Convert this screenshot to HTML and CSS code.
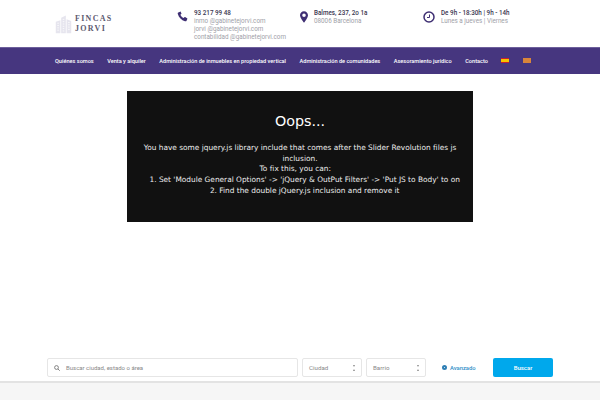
FILE: index.html
```html
<!DOCTYPE html>
<html lang="es">
<head>
    <meta charset="UTF-8">
    <meta name="viewport" content="width=device-width, initial-scale=1.0">
    <title>Fincas Jorvi</title>
    <link rel="stylesheet" href="styles.css">
</head>
<body>
<header class="top-bar">
    <div class="logo">
        <svg class="logo-mark" width="17" height="22" viewBox="0 0 22 24">
            <path d="M1 24V9l6-2V24zM8 24V4l6-3V24zM15 24V6l6 2V24z" fill="#e6e5ee"/>
            <path d="M3 11h2M3 14h2M3 17h2M3 20h2M10 6h2M10 9h2M10 12h2M10 15h2M10 18h2M10 21h2M17 10h2M17 13h2M17 16h2M17 19h2" stroke="#fff" stroke-width="1"/>
        </svg>
        <div class="logo-text">FINCAS<br>JORVI</div>
    </div>
    <div class="contact contact-phone">
        <svg class="contact-icon" width="11" height="11" viewBox="0 0 24 24">
            <path d="M6.600 1.500 2.800 3.200C1.600 3.800 1.400 5 1.800 6.600c2 7.600 8 13.600 15.600 15.600 1.600.4 2.800.2 3.400-1l1.700-3.800c.3-.6.1-1.200-.5-1.600l-4.300-2.600c-.5-.3-1.100-.2-1.500.3l-1.700 2c-3.200-1.500-5.700-4-7.200-7.200l2-1.700c.5-.4.6-1 .3-1.500L8.200 2c-.4-.6-1-.8-1.600-.5z" fill="#3f2f73"/>
        </svg>
        <div class="contact-text">
            <strong>93 217 99 48</strong>
            <span>inmo @gabinetejorvi.com</span>
            <span>jorvi @gabinetejorvi.com</span>
            <span>contabilidad @gabinetejorvi.com</span>
        </div>
    </div>
    <div class="contact contact-place">
        <svg class="contact-icon" width="8" height="12" viewBox="0 0 18 26">
            <path d="M9 0C4 0 0 4 0 9c0 6 9 17 9 17s9-11 9-17c0-5-4-9-9-9zm0 13a4 4 0 1 1 0-8 4 4 0 0 1 0 8z" fill="#3f2f73"/>
        </svg>
        <div class="contact-text">
            <strong>Balmes, 237, 2o 1a</strong>
            <span>08006 Barcelona</span>
        </div>
    </div>
    <div class="contact contact-hours">
        <svg class="contact-icon" width="12" height="12" viewBox="0 0 24 24">
            <circle cx="12" cy="12" r="10" fill="none" stroke="#3f2f73" stroke-width="3"/>
            <path d="M13 7v6H8" fill="none" stroke="#3f2f73" stroke-width="2"/>
        </svg>
        <div class="contact-text">
            <strong>De 9h - 18:30h | 9h - 14h</strong>
            <span>Lunes a jueves | Viernes</span>
        </div>
    </div>
</header>

<nav class="main-nav">
    <a href="#">Quiénes somos</a>
    <a href="#">Venta y alquiler</a>
    <a href="#">Administración de inmuebles en propiedad vertical</a>
    <a href="#">Administración de comunidades</a>
    <a href="#">Asesoramiento jurídico</a>
    <a href="#">Contacto</a>
    <span class="flag flag-es"></span>
    <span class="flag flag-ca"></span>
</nav>

<main class="slider">
    <div class="error-box">
        <h1>Oops...</h1>
        <p>You have some jquery.js library include that comes after the Slider Revolution files js inclusion.<br>
        To fix this, you can:&nbsp;&nbsp;&nbsp;&nbsp;<br>
        &nbsp;&nbsp;&nbsp;&nbsp;1. Set 'Module General Options' -&gt; 'jQuery &amp; OutPut Filters' -&gt; 'Put JS to Body' to on<br>
        &nbsp;&nbsp;&nbsp;&nbsp;2. Find the double jQuery.js inclusion and remove it</p>
    </div>
</main>

<form class="search-bar">
    <div class="search-input">
        <svg width="6" height="6" viewBox="0 0 12 12">
            <circle cx="5" cy="5" r="3.800" fill="none" stroke="#777" stroke-width="1.800"/>
            <path d="M8 8l3.500 3.500" stroke="#777" stroke-width="1.800"/>
        </svg>
        <span>Buscar ciudad, estado o área</span>
    </div>
    <div class="search-select"><span>Ciudad</span><i class="arrows"></i></div>
    <div class="search-select"><span>Barrio</span><i class="arrows"></i></div>
    <a class="advanced" href="#"><i class="gear"></i>Avanzado</a>
    <button type="button">Buscar</button>
</form>

<footer class="page-bottom"></footer>
</body>
</html>
```

FILE: styles.css
```css
* {
    box-sizing: border-box;
}

body {
    margin: 0;
    height: 400px;
    overflow: hidden;
    background-color: #fff;
    font-family: Roboto, sans-serif;
}

/* Top bar */
.top-bar {
    display: flex;
    height: 47px;
    padding-top: 9px;
    padding-left: 55px;
}

.logo {
    display: flex;
    gap: 3px;
    width: 122px;
    height: 26px;
    padding-top: 4px;
}

.logo-text {
    padding-top: 1px;
    font-family: "Liberation Serif", serif;
    font-size: 8px;
    font-weight: 700;
    line-height: 9.500px;
    letter-spacing: 1.300px;
    color: #5d5a70;
}

.contact {
    display: flex;
    align-items: flex-start;
    gap: 6px;
}

.contact-phone {
    width: 123px;
}

.contact-place {
    width: 123px;
}

.contact-icon {
    margin-top: 2px;
    flex: none;
}

.contact-text {
    display: flex;
    flex-direction: column;
    font-size: 6.300px;
    line-height: 8px;
    color: #a0a0a8;
}

.contact-text strong {
    font-weight: 500;
    color: #3a3650;
}

/* Nav */
.main-nav {
    display: flex;
    align-items: center;
    gap: 13.500px;
    height: 27px;
    padding-left: 55px;
    padding-bottom: 1px;
    background-color: #46367f;
    border-top: 1px solid #6d5f9b;
}

.main-nav a {
    font-size: 5.600px;
    font-weight: 500;
    color: #fff;
    text-decoration: none;
}

.flag {
    width: 8px;
    height: 5px;
}

.flag-es {
    background: linear-gradient(#c8202c 1px, #f6c400 1px, #f6c400 4px, #c8202c 4px);
}

.flag-ca {
    background-color: #d9853a;
}

/* Error box */
.slider {
    height: 284px;
    padding-top: 17px;
}

.error-box {
    width: 346px;
    height: 131px;
    margin: 0 auto;
    padding-top: 21px;
    background-color: #111;
    color: #fff;
    text-align: center;
    font-family: "DejaVu Sans", sans-serif;
}

.error-box h1 {
    margin: 0 0 13px;
    font-size: 14.300px;
    font-weight: 400;
    line-height: 18px;
}

.error-box p {
    margin: 0 10px;
    font-size: 7.400px;
    line-height: 10.700px;
    color: #eee;
}

/* Search */
.search-bar {
    display: flex;
    align-items: center;
    height: 19px;
    padding-left: 47px;
}

.search-input {
    display: flex;
    align-items: center;
    gap: 6px;
    width: 251px;
    height: 19px;
    padding-left: 6px;
    margin-right: 4px;
    border: 1px solid #e6e6e6;
    border-radius: 2px;
    font-size: 6px;
    color: #888;
}

.search-select {
    display: flex;
    align-items: center;
    justify-content: space-between;
    width: 60px;
    height: 19px;
    padding: 0 6px;
    margin-right: 4px;
    border: 1px solid #e6e6e6;
    border-radius: 2px;
    font-size: 6.200px;
    color: #888;
}

.arrows {
    width: 0;
    height: 6px;
    border-left: 1.500px solid transparent;
    border-right: 1.500px solid transparent;
    border-top: 2px solid #888;
    border-bottom: 2px solid #888;
}

.advanced {
    display: flex;
    align-items: center;
    gap: 3px;
    width: 51px;
    margin-left: 12px;
    font-size: 5.800px;
    font-weight: 500;
    color: #2f8fc8;
    text-decoration: none;
}

.gear {
    width: 5px;
    height: 5px;
    border: 2px solid #2f7fb5;
    border-radius: 50%;
}

button {
    width: 60px;
    height: 19px;
    border: none;
    border-radius: 2px;
    background-color: #00a8ec;
    color: #fff;
    font-family: Roboto, sans-serif;
    font-size: 6px;
    font-weight: 500;
}

.page-bottom {
    height: 19px;
    margin-top: 4px;
    background-color: #f6f6f6;
    border-top: 2px solid #e3e3e3;
}
```
